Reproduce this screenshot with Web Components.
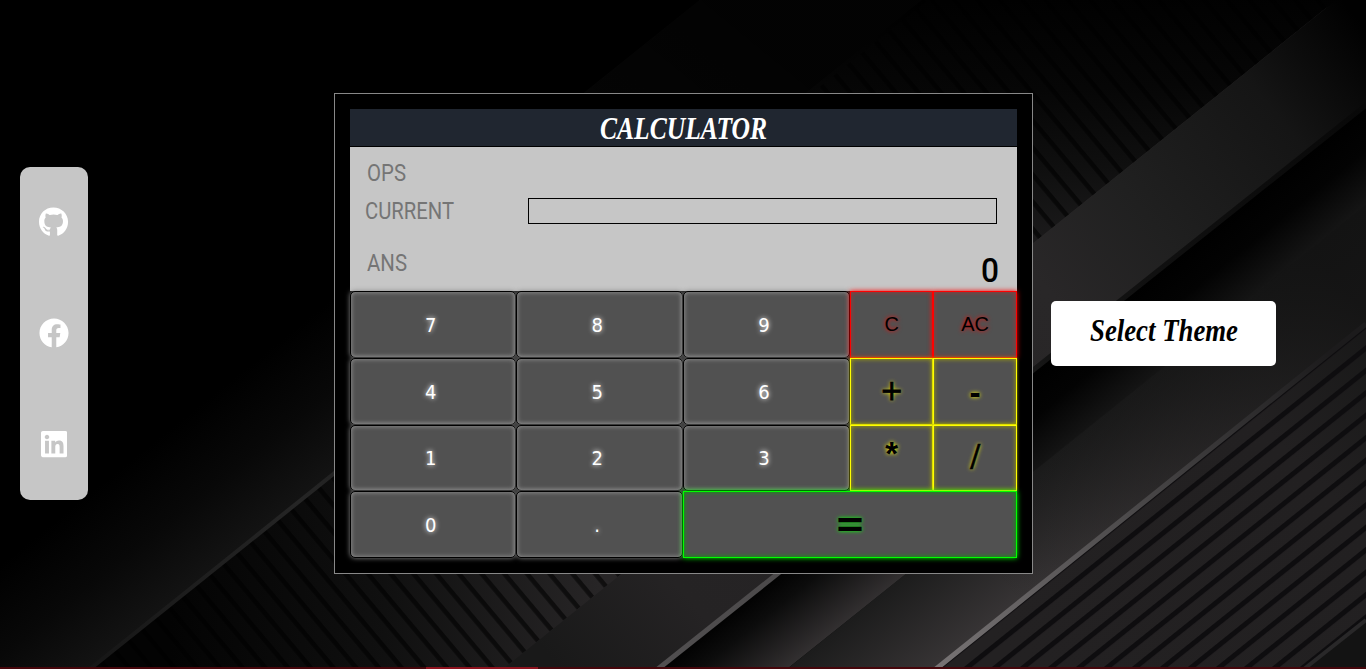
<!DOCTYPE html>
<html lang="en">
<head>
<meta charset="utf-8">
<title>Calculator</title>
<style>
html, body { margin: 0; height: 100%; background: #000; overflow: hidden; }
</style>
</head>
<body>
<calculator-app></calculator-app>
<script>
const define = (name, html, setup) => {
  const tpl = document.createElement('template');
  tpl.innerHTML = html;
  customElements.define(name, class extends HTMLElement {
    constructor() {
      super();
      this.attachShadow({ mode: 'open' }).append(tpl.content.cloneNode(true));
    }
    connectedCallback() { if (setup) setup(this, this.shadowRoot); }
  });
};

/* Text squeezed or stretched to a given width */
define('fit-text', `
<style>
:host { display: block; white-space: nowrap; }
span { display: inline-block; transform-origin: 0 50%; }
</style><span><slot></slot></span>`, (el, root) => {
  const w = +el.getAttribute('width');
  const span = root.querySelector('span');
  el.style.width = w + 'px';
  span.style.transform = 'scaleX(' + w / span.getBoundingClientRect().width + ')';
});

/* Dark diagonal bands behind the page */
define('diagonal-backdrop', `
<style>:host { display: block; } svg { display: block; width: 100%; height: 100%; }</style>
<svg viewBox="0 0 1366 669" preserveAspectRatio="none">
  <defs>
    <pattern id="up" width="40" height="17.5" patternUnits="userSpaceOnUse" patternTransform="translate(964 667) rotate(-38.7)">
      <rect y="0" width="40" height="5" fill="#0e0d0f"/></pattern>
    <pattern id="down" width="40" height="17.4" patternUnits="userSpaceOnUse" patternTransform="translate(510 658) rotate(50)">
      <rect width="40" height="4.6" fill="#000" opacity=".6"/></pattern>
    <linearGradient id="g0" gradientUnits="userSpaceOnUse" x1="100" y1="485" x2="189" y2="596">
      <stop offset="0" stop-color="#000"/><stop offset=".5" stop-color="#080808"/><stop offset="1" stop-color="#141414"/></linearGradient>
    <linearGradient id="g1" gradientUnits="userSpaceOnUse" x1="170" y1="620" x2="600" y2="620">
      <stop offset="0" stop-color="#030303"/><stop offset=".5" stop-color="#101010"/><stop offset="1" stop-color="#272526"/></linearGradient>
    <linearGradient id="g1b" gradientUnits="userSpaceOnUse" x1="1020" y1="260" x2="1010" y2="0">
      <stop offset="0" stop-color="#1e1d1e"/><stop offset=".35" stop-color="#0f0f0f"/><stop offset=".65" stop-color="#060606"/><stop offset="1" stop-color="#010101"/></linearGradient>
    <linearGradient id="g2" gradientUnits="userSpaceOnUse" x1="560" y1="669" x2="1350" y2="10">
      <stop offset="0" stop-color="#191919"/><stop offset=".14" stop-color="#252324"/><stop offset=".6" stop-color="#292728"/><stop offset=".72" stop-color="#202020"/><stop offset=".88" stop-color="#151515"/><stop offset="1" stop-color="#010101"/></linearGradient>
    <linearGradient id="g3" gradientUnits="userSpaceOnUse" x1="720" y1="622" x2="770" y2="685">
      <stop offset="0" stop-color="#020202"/><stop offset=".3" stop-color="#0c0c0c"/><stop offset="1" stop-color="#343132"/></linearGradient>
    <linearGradient id="g3b" gradientUnits="userSpaceOnUse" x1="1175" y1="258" x2="1225" y2="320">
      <stop offset="0" stop-color="#000"/><stop offset=".45" stop-color="#030303"/><stop offset="1" stop-color="#151515"/></linearGradient>
    <linearGradient id="g4" gradientUnits="userSpaceOnUse" x1="864" y1="608" x2="922" y2="680">
      <stop offset="0" stop-color="#1c1c1c"/><stop offset="1" stop-color="#373435"/></linearGradient>
    <linearGradient id="fade4" gradientUnits="userSpaceOnUse" x1="980" y1="560" x2="1330" y2="270">
      <stop offset="0" stop-color="#141414" stop-opacity="0"/><stop offset="1" stop-color="#121212" stop-opacity=".9"/></linearGradient>
    <linearGradient id="edge" gradientUnits="userSpaceOnUse" x1="940" y1="667" x2="1330" y2="355">
      <stop offset="0" stop-color="#777374"/><stop offset=".5" stop-color="#4b494a"/><stop offset="1" stop-color="#1c1b1c"/></linearGradient>
    <linearGradient id="edge2" gradientUnits="userSpaceOnUse" x1="660" y1="667" x2="1366" y2="105">
      <stop offset="0" stop-color="#514f50"/><stop offset=".2" stop-color="#4a4849"/><stop offset=".55" stop-color="#141414"/><stop offset="1" stop-color="#080808"/></linearGradient>
    <linearGradient id="edge0" gradientUnits="userSpaceOnUse" x1="90" y1="669" x2="925" y2="0">
      <stop offset="0" stop-color="#161616"/><stop offset=".25" stop-color="#252525"/><stop offset=".6" stop-color="#101010"/><stop offset="1" stop-color="#000"/></linearGradient>
    <linearGradient id="dim" gradientUnits="userSpaceOnUse" x1="340" y1="440" x2="700" y2="0">
      <stop offset="0" stop-color="#000" stop-opacity="0"/><stop offset=".7" stop-color="#000" stop-opacity=".5"/><stop offset="1" stop-color="#000" stop-opacity=".75"/></linearGradient>
    <linearGradient id="g5" gradientUnits="userSpaceOnUse" x1="1020" y1="669" x2="1366" y2="320">
      <stop offset="0" stop-color="#232122"/><stop offset=".7" stop-color="#222021"/><stop offset="1" stop-color="#181818"/></linearGradient>
  </defs>
  <rect width="1366" height="669" fill="#000"/>
  <path d="M-135 669L700 0H925L90 669Z" fill="url(#g0)"/>
  <path d="M350 280L700 0H925L575 280Z" fill="#0a0a0a"/>
  <path d="M-135 669L700 0H925L90 669Z" fill="url(#dim)"/>
  <path d="M90 669L790 108L1366 0H1340L505 669Z" fill="url(#g1)"/>
  <path d="M790 108L925 0H1336L900 350Z" fill="url(#g1b)"/>
  <path d="M90 669L925 0H1336L503 669Z" fill="url(#down)"/>
  <path d="M503 669L1336 0H1366V105L658 669Z" fill="url(#g2)"/>
  <path d="M658 669L950 436V539L787 669Z" fill="url(#g3)"/>
  <path d="M950 436L1366 105V205L950 539Z" fill="url(#g3b)"/>
  <path d="M787 669L1366 205V325L937 669Z" fill="url(#g4)"/>
  <path d="M787 669L1366 205V325L937 669Z" fill="url(#fade4)"/>
  <path d="M937 669L1366 325V669Z" fill="url(#g5)"/>
  <path d="M937 669L1366 325V669Z" fill="url(#up)"/>
  <path d="M1304 669L1366 620V669Z" fill="#131313"/>
  <path d="M1304 669L1366 620" stroke="#292829" stroke-width="4"/>
  <path d="M90 669L925 0" stroke="url(#edge0)" stroke-width="4"/>
  <path d="M658 669L1366 105" stroke="url(#edge2)" stroke-width="5"/>
  <path d="M936 669L1366 324" stroke="url(#edge)" stroke-width="5"/>
</svg>`);

/* Icon column; entries are slotted */
define('social-bar', `
<style>
:host { display: flex; flex-direction: column; justify-content: space-around; align-items: center;
  box-sizing: border-box; width: 68px; height: 333px; padding-bottom: 1px; border-radius: 10px; background: #c6c6c6; flex: none; }
</style><slot></slot>`);

const ICONS = {
  github: ['0 0 496 512', 'M165.900 397.400c0 2-2.300 3.600-5.200 3.600-3.300.3-5.600-1.300-5.600-3.600 0-2 2.300-3.600 5.200-3.600 3-.3 5.600 1.300 5.600 3.600zm-31.100-4.500c-.7 2 1.300 4.300 4.300 4.900 2.600 1 5.600 0 6.200-2s-1.300-4.300-4.300-5.200c-2.600-.7-5.500.3-6.200 2.300zm44.200-1.700c-2.900.7-4.900 2.600-4.600 4.900.3 2 2.900 3.300 5.900 2.600 2.900-.7 4.900-2.600 4.600-4.600-.3-1.900-3-3.200-5.900-2.900zM244.800 8C106.100 8 0 113.300 0 252c0 110.900 69.800 205.800 169.500 239.200 12.800 2.300 17.300-5.600 17.300-12.100 0-6.200-.3-40.400-.3-61.400 0 0-70 15-84.700-29.800 0 0-11.400-29.100-27.800-36.600 0 0-22.900-15.700 1.600-15.400 0 0 24.900 2 38.600 25.800 21.900 38.600 58.600 27.500 72.900 20.900 2.300-16 8.800-27.100 16-33.700-55.900-6.200-112.300-14.300-112.300-110.500 0-27.500 7.600-41.300 23.600-58.900-2.600-6.500-11.100-33.300 2.600-67.900 20.900-6.500 69 27 69 27 20-5.600 41.500-8.500 62.800-8.500s42.800 2.900 62.800 8.500c0 0 48.100-33.600 69-27 13.700 34.700 5.200 61.400 2.600 67.900 16 17.700 25.800 31.500 25.800 58.900 0 96.500-58.900 104.200-114.800 110.500 9.200 7.900 17 22.900 17 46.400 0 33.700-.3 75.400-.3 83.600 0 6.500 4.600 14.400 17.300 12.100C428.200 457.800 496 362.900 496 252 496 113.300 383.500 8 244.800 8z'],
  facebook: ['0 0 512 512', 'M504 256C504 119 393 8 256 8S8 119 8 256c0 123.780 90.690 226.380 209.250 245V327.690h-63V256h63v-54.640c0-62.150 37-96.480 93.670-96.480 27.140 0 55.520 4.840 55.520 4.840v61h-31.280c-30.800 0-40.410 19.120-40.410 38.730V256h68.780l-11 71.690h-57.780V501C413.310 482.380 504 379.780 504 256z'],
  linkedin: ['0 0 448 512', 'M416 32H31.900C14.300 32 0 46.500 0 64.300v383.400C0 465.500 14.300 480 31.900 480H416c17.600 0 32-14.500 32-32.300V64.300c0-17.800-14.400-32.300-32-32.300zM135.400 416H69V202.200h66.500V416zm-33.200-243c-21.300 0-38.500-17.300-38.500-38.500S80.900 96 102.200 96c21.200 0 38.500 17.300 38.500 38.500 0 21.300-17.200 38.500-38.500 38.500zm282.100 243h-66.400V312c0-24.800-.5-56.700-34.500-56.700-34.600 0-39.900 27-39.900 54.900V416h-66.400V202.200h63.700v29.200h.9c8.900-16.800 30.600-34.500 62.900-34.500 67.200 0 79.700 44.300 79.700 101.900V416z']
};
define('social-icon', `
<style>:host { display: block; } svg { display: block; height: 30px; fill: #fff; }</style>
<svg><path/></svg>`, (el, root) => {
  const [box, d] = ICONS[el.getAttribute('name')];
  const svg = root.querySelector('svg');
  svg.setAttribute('viewBox', box);
  svg.style.width = 30 * box.split(' ')[2] / 512 + 'px';
  root.querySelector('path').setAttribute('d', d);
});

define('theme-button', `
<style>
:host { display: flex; justify-content: center; box-sizing: border-box; width: 225px; height: 65px; padding-top: 12px;
  border-radius: 5px; background: #fff; color: #000; font: italic bold 31px/36px "Liberation Serif", serif; flex: none; }
</style><fit-text width="148"><slot></slot></fit-text>`);

define('calc-display', `
<style>
:host { display: grid; grid-template-rows: 45px 38px 61px; height: 144px; background: #c6c6c6; color: #757575;
  font: 24px/28px Roboto, sans-serif; }
.row { display: flex; justify-content: space-between; padding: 0 20px 0 17px; }
.ops { padding-top: 12px; }
.cur { padding-left: 15px; padding-top: 5px; }
.ans { padding-top: 19px; padding-right: 18px; }
.field { box-sizing: border-box; width: 469px; height: 26px; margin-top: 1px; border: 1px solid #000; }
.value { color: #000; font: 500 33px/44px Roboto, sans-serif; }
</style>
<div class="row ops"><fit-text width="39">OPS</fit-text></div>
<div class="row cur"><fit-text width="89">CURRENT</fit-text><div class="field"></div></div>
<div class="row ans"><fit-text width="40">ANS</fit-text><fit-text class="value" width="18">0</fit-text></div>`);

define('calc-key', `
<style>
:host { display: flex; align-items: center; justify-content: center; box-sizing: border-box; min-width: 0;
  border: 1px solid #000; border-radius: 5px; background: #515151; color: #fff;
  box-shadow: 0 0 5px #888, inset 0 0 5px #999; font: 20px/24px "DejaVu Sans Condensed", "DejaVu Sans", sans-serif;
  font-stretch: condensed; text-shadow: 0 0 5px #fff; padding-right: 5px; padding-top: 1px; }
:host([kind]) { border-radius: 0; padding-right: 0; color: #000; }
:host([kind="clear"]) { border-color: #f00; box-shadow: 0 0 5px #f00, inset 0 0 5px #a33; text-shadow: 0 0 4px #f00;
  font: 20px/24px "Liberation Sans", sans-serif; padding-top: 0; }
:host([kind="op"]) { border-color: #ff0; box-shadow: 0 0 3px #aa0, inset 0 0 5px #aa0; text-shadow: 0 0 4px #ff0;
  font: bold 28px/32px "DejaVu Sans", sans-serif; padding-top: 0; }
:host([sign="plus"]) { font-weight: normal; -webkit-text-stroke: .8px #000; }
:host([sign="minus"]) { padding-top: 5px; }
:host([sign="times"]) { font: bold 33px/32px "Liberation Sans", sans-serif; padding-bottom: 7px; }
:host([sign="divide"]) { font-weight: normal; font-size: 31px; padding-bottom: 5px; -webkit-text-stroke: .4px #000; }
:host([kind="equals"]) { grid-column: span 3; border-color: #0f0; box-shadow: 0 0 5px #0f0, inset 0 0 5px #0a0;
  text-shadow: 0 0 4px #0f0; font: bold 37px/32px "DejaVu Sans", sans-serif; padding: 0 0 1px; }
</style><slot></slot>`);

define('calc-panel', `
<style>
:host { display: block; box-sizing: border-box; width: 699px; height: 481px; padding: 15px; border: 1px solid #888;
  background: #000; flex: none; }
header { display: flex; justify-content: center; box-sizing: border-box; height: 38px; padding-top: 1px; background: #202630; color: #fff;
  border-bottom: 1px solid #000; font: italic bold 32px/36px "Liberation Serif", serif; }
.keys { display: grid; grid-template-columns: 166.300px 166.800px 167px 83.200px 1fr; grid-template-rows: repeat(4, 1fr); height: 267px; }
</style>
<header><fit-text width="167">CALCULATOR</fit-text></header>
<calc-display></calc-display>
<div class="keys">
  <calc-key>7</calc-key><calc-key>8</calc-key><calc-key>9</calc-key><calc-key kind="clear">C</calc-key><calc-key kind="clear">AC</calc-key>
  <calc-key>4</calc-key><calc-key>5</calc-key><calc-key>6</calc-key><calc-key kind="op" sign="plus">+</calc-key><calc-key kind="op" sign="minus">-</calc-key>
  <calc-key>1</calc-key><calc-key>2</calc-key><calc-key>3</calc-key><calc-key kind="op" sign="times">*</calc-key><calc-key kind="op" sign="divide">/</calc-key>
  <calc-key>0</calc-key><calc-key>.</calc-key><calc-key kind="equals">=</calc-key>
</div>`);

/* Thin strip along the bottom with a brighter played segment */
define('progress-strip', `
<style>
:host { display: flex; height: 2px; background: #46060b; }
i { width: 112px; margin-left: 426px; background: #8d121e; }
</style><i></i>`);

define('calculator-app', `
<style>
:host { display: grid; grid-template-rows: 667px 2px; height: 669px; position: relative; overflow: hidden; }
diagonal-backdrop { position: absolute; inset: 0; }
main { display: flex; align-items: center; padding-left: 20px; position: relative; }
calc-panel { margin: 0 18px 0 246px; }
progress-strip { position: relative; }
</style>
<diagonal-backdrop></diagonal-backdrop>
<main>
  <social-bar>
    <social-icon name="github"></social-icon>
    <social-icon name="facebook"></social-icon>
    <social-icon name="linkedin"></social-icon>
  </social-bar>
  <calc-panel></calc-panel>
  <theme-button>Select Theme</theme-button>
</main>
<progress-strip></progress-strip>`);
</script>
</body>
</html>
